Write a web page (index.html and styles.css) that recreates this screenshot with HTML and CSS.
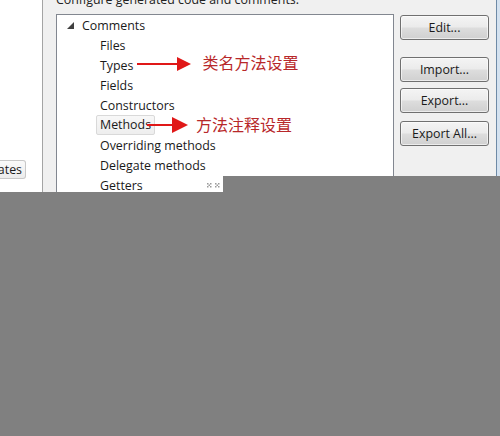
FILE: index.html
```html
<!DOCTYPE html>
<html>
<head>
<meta charset="utf-8">
<link rel="stylesheet" href="styles.css">
</head>
<body>
<div class="screen">
  <div class="left-pane">
    <div class="stub-btn">ates</div>
  </div>
  <div class="main">
    <div class="header">Configure generated code and comments:</div>
    <div class="content">
      <div class="tree">
        <div class="row root">
          <svg class="twisty" width="7" height="7" viewBox="0 0 7 7"><polygon points="7,0 7,7 0,7" fill="#404040"/></svg>
          <span>Comments</span>
        </div>
        <div class="row child"><span>Files</span></div>
        <div class="row child"><span>Types</span>
          <svg class="arrow a1" width="56" height="16" viewBox="0 0 56 16"><line x1="0" y1="8" x2="42" y2="8" stroke="#e01818" stroke-width="2"/><polygon points="40,1 54,8 40,15" fill="#e01818"/></svg>
          <span class="note n1">类名方法设置</span>
        </div>
        <div class="row child"><span>Fields</span></div>
        <div class="row child"><span>Constructors</span></div>
        <div class="row child"><span class="hot">Methods</span>
          <svg class="arrow a2" width="42" height="16" viewBox="0 0 42 16"><line x1="0" y1="8" x2="28" y2="8" stroke="#e01818" stroke-width="2"/><polygon points="25,0 41,8 25,16" fill="#e01818"/></svg>
          <span class="note n2">方法注释设置</span>
        </div>
        <div class="row child"><span>Overriding methods</span></div>
        <div class="row child"><span>Delegate methods</span></div>
        <div class="row child"><span>Getters</span>
          <svg class="marks" width="14" height="6" viewBox="0 0 14 6"><g fill="#9a9a9a"><rect x="0" y="0" width="1.5" height="1.5"/><rect x="3" y="0" width="1.5" height="1.5"/><rect x="1.5" y="1.5" width="1.5" height="1.5"/><rect x="0" y="3" width="1.5" height="1.5"/><rect x="3" y="3" width="1.5" height="1.5"/><rect x="8" y="0" width="1.5" height="1.5"/><rect x="11" y="0" width="1.5" height="1.5"/><rect x="9.5" y="1.5" width="1.5" height="1.5"/><rect x="8" y="3" width="1.5" height="1.5"/><rect x="11" y="3" width="1.5" height="1.5"/></g></svg>
        </div>
        <div class="row child"><span>Setters</span></div>
      </div>
      <div class="buttons">
        <div class="btn b-edit">Edit...</div>
        <div class="btn b-import">Import...</div>
        <div class="btn b-export">Export...</div>
        <div class="btn b-exportall">Export All...</div>
      </div>
    </div>
  </div>
  <div class="edge"></div>
  <div class="cover cover-right"></div>
  <div class="cover cover-bottom"></div>
</div>
</body>
</html>
```
FILE: styles.css
```css
html, body {
  margin: 0;
  padding: 0;
}
body {
  width: 500px;
  height: 436px;
  overflow: hidden;
  font-family: "Open Sans", "Noto Sans", sans-serif;
  font-size: 12.4px;
  color: #1a1a1a;
}
.screen {
  position: relative;
  width: 500px;
  height: 436px;
  display: flex;
  overflow: hidden;
  background: #f0f0f0;
}
.left-pane {
  width: 42px;
  flex: none;
  background: #ffffff;
  border-right: 1px solid #a4a4a4;
  overflow: hidden;
  padding-top: 160px;
  box-sizing: content-box;
}
.stub-btn {
  width: 26px;
  height: 19px;
  box-sizing: border-box;
  border: 1px solid #c8c8c8;
  border-left: none;
  border-radius: 0 3px 3px 0;
  background: linear-gradient(#fafafa, #ececec);
  display: flex;
  justify-content: flex-end;
  align-items: center;
  padding-right: 3px;
  white-space: nowrap;
  line-height: 16px;
}
.main {
  flex: 1;
  display: flex;
  flex-direction: column;
  min-width: 0;
}
.header {
  margin-top: -8px;
  height: 16px;
  line-height: 16px;
  padding-left: 13px;
  white-space: nowrap;
  color: #222;
}
.content {
  display: flex;
  margin-top: 6px;
  flex: 1;
}
.tree {
  margin-left: 13px;
  width: 338px;
  flex: none;
  box-sizing: border-box;
  background: #ffffff;
  border: 1px solid #828790;
  border-bottom: none;
}
.row {
  height: 20px;
  display: flex;
  align-items: center;
  white-space: nowrap;
}
.root {
  padding-left: 10px;
}
.twisty {
  margin-right: 8px;
  margin-top: 1px;
}
.child {
  padding-left: 43px;
}
.hot {
  margin-left: -4px;
  padding: 0 3px 0 3px;
  height: 18px;
  line-height: 18px;
  border: 1px solid #d9d9d9;
  border-radius: 2px;
  background: linear-gradient(#f8f8f8, #eeeeee);
}
.arrow {
  flex: none;
}
.a1 {
  margin-left: 4px;
  margin-top: -2px;
}
.a2 {
  margin-left: -8px;
}
.note {
  font-family: "Noto Sans CJK SC", "Noto Sans", sans-serif;
  font-size: 16px;
  color: #b8282a;
  line-height: 20px;
}
.n1 {
  margin-left: 9px;
  margin-top: -7px;
}
.n2 {
  margin-left: 7px;
  margin-top: -3px;
}
.marks {
  margin-left: 64px;
  margin-top: 2px;
}
.buttons {
  margin-left: 6px;
  width: 89px;
  flex: none;
  display: flex;
  flex-direction: column;
}
.btn {
  height: 25px;
  box-sizing: border-box;
  border: 1px solid #707070;
  border-radius: 3px;
  background: linear-gradient(#f4f4f4 0%, #ebebeb 48%, #dddddd 52%, #d0d0d0 100%);
  display: flex;
  align-items: center;
  justify-content: center;
  color: #1a1a1a;
  box-shadow: inset 0 0 0 1px rgba(255,255,255,0.6);
}
.b-edit { margin-top: 1px; }
.b-import { margin-top: 17px; }
.b-export { margin-top: 6px; }
.b-exportall { margin-top: 8px; }
.edge {
  width: 3px;
  flex: none;
  border-left: 1px solid #6e8aa6;
  background: #d4e2f0;
  margin-left: 6px;
}
.cover {
  position: absolute;
  background: #808080;
}
.cover-right {
  left: 223px;
  top: 176px;
  right: 0;
  bottom: 0;
}
.cover-bottom {
  left: 0;
  top: 192px;
  right: 0;
  bottom: 0;
}
```
